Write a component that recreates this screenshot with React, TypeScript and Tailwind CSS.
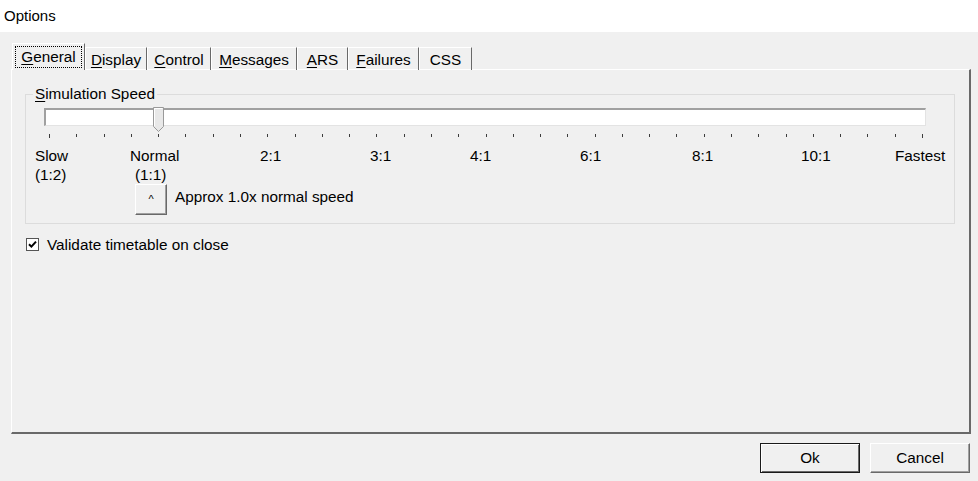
import React from 'react';

type Tab = { label: string; key?: number; width: string };

const TABS: Tab[] = [
  { label: 'Display', key: 0, width: 'w-[62px]' },
  { label: 'Control', key: 0, width: 'w-[64px]' },
  { label: 'Messages', key: 0, width: 'w-[86px]' },
  { label: 'ARS', key: 0, width: 'w-[51px]' },
  { label: 'Failures', key: 0, width: 'w-[71px]' },
  { label: 'CSS', width: 'w-[53px]' },
];

const SPEED_LABELS = [
  { text: 'Slow', w: 'w-[95px]' },
  { text: 'Normal', w: 'w-[130px]' },
  { text: '2:1', w: 'w-[110px]' },
  { text: '3:1', w: 'w-[100px]' },
  { text: '4:1', w: 'w-[110px]' },
  { text: '6:1', w: 'w-[112px]' },
  { text: '8:1', w: 'w-[109px]' },
  { text: '10:1', w: 'w-[94px]' },
  { text: 'Fastest', w: '' },
];

// underline the access key letter, like the win32 dialog does
function AccessLabel({ text, k }: { text: string; k?: number }) {
  if (k === undefined) return <>{text}</>;
  return (
    <>
      {text.slice(0, k)}
      <span className="underline decoration-1 underline-offset-[2px]">{text[k]}</span>
      {text.slice(k + 1)}
    </>
  );
}

function Thumb() {
  return (
    <svg width="11" height="25" viewBox="0 0 11 25" className="block">
      <polygon points="0.5,0.5 10.5,0.5 10.5,19.5 5.5,24.5 0.5,19.5" fill="#e8e8e8" stroke="#9a9a9a" />
      <polyline points="1.5,19 1.5,1.5 9.5,1.5" fill="none" stroke="#ffffff" />
    </svg>
  );
}

function CheckBox() {
  return (
    <span className="inline-flex h-[13px] w-[13px] items-center justify-center border border-[#555] bg-white">
      <svg width="9" height="9" viewBox="0 0 9 9">
        <path d="M1 4.2 L3.4 6.6 L8 1.6" fill="none" stroke="#000" strokeWidth="2" />
      </svg>
    </span>
  );
}

function WinButton({ label, isDefault }: { label: string; isDefault?: boolean }) {
  return (
    <button
      className={`flex h-[30px] w-[100px] items-center justify-center bg-[#f0f0f0] text-[15.3px] text-black ${
        isDefault
          ? 'border border-[#1a1a1a] shadow-[inset_1px_1px_0_#ffffff,inset_-1px_-1px_0_#696969]'
          : 'border border-t-white border-l-white border-r-[#696969] border-b-[#696969] shadow-[inset_-1px_-1px_0_#a0a0a0]'
      }`}
    >
      {label}
    </button>
  );
}

export default function App() {
  const ticks = Array.from({ length: 33 }, (_, i) => i);

  return (
    <div className="h-[481px] w-[978px] overflow-hidden bg-[#f0f0f0] font-['Liberation_Sans',Arial,sans-serif] text-[15.3px] text-black">
      {/* title bar */}
      <div className="flex h-[32px] items-center bg-white pl-[4px] text-[15px]">Options</div>

      {/* tab strip */}
      <div className="flex h-[38px] items-end pl-[12px] pt-[11px]">
        <div className="relative z-10 flex h-[27px] w-[73px] items-start justify-center border-t border-l border-r border-t-white border-l-white border-r-[#696969] bg-[#f0f0f0] pt-[2px]">
          <span className="flex h-[22px] w-[67px] items-center justify-center border border-dotted border-black leading-none">
            <AccessLabel text="General" k={0} />
          </span>
        </div>
        {TABS.map((t) => (
          <div
            key={t.label}
            className={`flex h-[23px] ${t.width} items-center justify-center border-t border-l border-r border-t-white border-l-white border-r-[#696969] pt-[1px] leading-none`}
          >
            <AccessLabel text={t.label} k={t.key} />
          </div>
        ))}
      </div>

      {/* tab page */}
      <div className="-mt-px ml-[11px] h-[365px] w-[960px] border-t border-l border-t-white border-l-white border-r-2 border-b-2 border-r-[#696969] border-b-[#696969]">
        <fieldset className="ml-[13px] mt-[17px] w-[930px] border border-[#dcdcdc] pb-[8px]">
          <legend className="ml-[7px] px-[2px] leading-[14px]">
            <AccessLabel text="Simulation Speed" k={0} />
          </legend>

          {/* trackbar */}
          <div className="relative ml-[18px] mt-[7px] h-[18px] w-[882px] border-t-2 border-l-2 border-b border-r border-t-[#a0a0a0] border-l-[#a0a0a0] border-b-[#e3e3e3] border-r-[#e3e3e3] bg-white">
            <div className="absolute left-[107px] top-[-3px]">
              <Thumb />
            </div>
          </div>
          <div className="ml-[23px] mt-[8px] flex h-[4px] w-[874px] items-start justify-between">
            {ticks.map((i) => (
              <span
                key={i}
                className={`block w-px bg-[#3c3c3c] ${i === 0 || i === 32 ? 'h-[4px]' : 'h-[3px]'}`}
              />
            ))}
          </div>

          <div className="ml-[9px] mt-[8px] flex leading-[19px]">
            {SPEED_LABELS.map((l) => (
              <span key={l.text} className={`${l.w} shrink-0`}>
                {l.text}
              </span>
            ))}
          </div>
          <div className="ml-[9px] flex leading-[19px]">
            <span className="w-[100px] shrink-0">(1:2)</span>
            <span>(1:1)</span>
          </div>
          <div className="ml-[109px] flex items-center gap-[8px]">
            <div className="flex h-[31px] w-[32px] items-center justify-center border border-t-white border-l-white border-r-[#696969] border-b-[#696969] shadow-[inset_-1px_-1px_0_#a0a0a0] text-[11px] leading-none">
              ^
            </div>
            <span className="-mt-[6px] leading-[19px]">Approx 1.0x normal speed</span>
          </div>
        </fieldset>

        <div className="ml-[14px] mt-[12px] flex items-center gap-[8px] leading-[17px]">
          <CheckBox />
          <span>Validate timetable on close</span>
        </div>
      </div>

      {/* dialog buttons */}
      <div className="mt-[9px] flex justify-end gap-[10px] pr-[8px]">
        <WinButton label="Ok" isDefault />
        <WinButton label="Cancel" />
      </div>
    </div>
  );
}
